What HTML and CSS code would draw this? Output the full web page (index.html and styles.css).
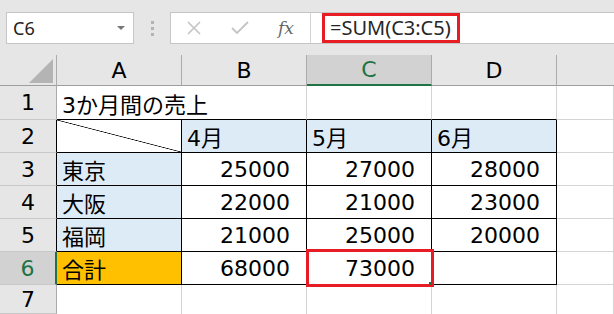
FILE: index.html
```
<!DOCTYPE html>
<html lang="ja">
<head>
    <meta charset="UTF-8">
    <meta name="viewport" content="width=device-width, initial-scale=1.0">
    <title>3か月間の売上</title>
    <link rel="stylesheet" href="styles.css">
</head>
<body>
    <div class="toolbar">
        <div class="namebox">
            <span>C6</span>
            <span class="arrow"></span>
        </div>
        <div class="grip"><i></i><i></i><i></i></div>
        <div class="formula">
            <div class="buttons">
                <svg class="btn" width="16" height="16" viewBox="0 0 16 16">
                    <path d="M2 2 L14 14 M14 2 L2 14" stroke="#c4c4c4" stroke-width="1.6" fill="none"/>
                </svg>
                <svg class="btn" width="18" height="16" viewBox="0 0 18 16">
                    <path d="M1 8 L6 13 L17 2" stroke="#c4c4c4" stroke-width="1.8" fill="none"/>
                </svg>
                <span class="fx">fx</span>
            </div>
            <div class="input">
                <span class="mark">=SUM(C3:C5)</span>
            </div>
        </div>
    </div>

    <div class="sheet">
        <!-- column headers -->
        <div class="corner"><span class="tri"></span></div>
        <div class="colhead">A</div>
        <div class="colhead">B</div>
        <div class="colhead active">C</div>
        <div class="colhead">D</div>
        <div class="colhead last"></div>

        <!-- row 1 -->
        <div class="rowhead">1</div>
        <div class="cell spill top">3か月間の売上</div>
        <div class="cell top"></div>
        <div class="cell top"></div>
        <div class="cell top"></div>
        <div class="cell"></div>

        <!-- row 2 -->
        <div class="rowhead boxed">2</div>
        <div class="cell box diag"></div>
        <div class="cell box blue">4月</div>
        <div class="cell box blue">5月</div>
        <div class="cell box blue">6月</div>
        <div class="cell"></div>

        <!-- row 3 -->
        <div class="rowhead boxed">3</div>
        <div class="cell box blue">東京</div>
        <div class="cell box num">25000</div>
        <div class="cell box num">27000</div>
        <div class="cell box num">28000</div>
        <div class="cell"></div>

        <!-- row 4 -->
        <div class="rowhead boxed">4</div>
        <div class="cell box blue">大阪</div>
        <div class="cell box num">22000</div>
        <div class="cell box num">21000</div>
        <div class="cell box num">23000</div>
        <div class="cell"></div>

        <!-- row 5 -->
        <div class="rowhead boxed">5</div>
        <div class="cell box blue">福岡</div>
        <div class="cell box num">21000</div>
        <div class="cell box num">25000</div>
        <div class="cell box num">20000</div>
        <div class="cell"></div>

        <!-- row 6 -->
        <div class="rowhead active">6</div>
        <div class="cell box orange">合計</div>
        <div class="cell box num">68000</div>
        <div class="cell box num selected">73000<span class="sel"></span><span class="handle"></span></div>
        <div class="cell box"></div>
        <div class="cell"></div>

        <!-- row 7 -->
        <div class="rowhead">7</div>
        <div class="cell open"></div>
        <div class="cell open"></div>
        <div class="cell open"></div>
        <div class="cell open"></div>
        <div class="cell open"></div>
    </div>
</body>
</html>
```

FILE: styles.css
```
body {
    margin: 0;
    width: 614px;
    height: 314px;
    overflow: hidden;
    background: #fff;
    font-family: "DejaVu Sans", "Noto Sans CJK JP", sans-serif;
}

/* name box + formula bar */
.toolbar {
    height: 55px;
    background: #e6e6e6;
    display: flex;
    align-items: flex-start;
    padding-top: 12px;
    box-sizing: border-box;
    overflow: hidden;
}
.toolbar > div {
    flex-shrink: 0;
}
.namebox {
    margin-left: 6px;
    width: 128px;
    height: 32px;
    box-sizing: border-box;
    background: #fff;
    border: 1px solid #c6c6c6;
    display: flex;
    align-items: center;
    justify-content: space-between;
    padding: 0 8px 0 6px;
    font-family: "Noto Sans", sans-serif;
    font-size: 18px;
    color: #222;
}
.arrow {
    width: 0;
    height: 0;
    border-left: 4px solid transparent;
    border-right: 4px solid transparent;
    border-top: 4px solid #777;
}
.grip {
    width: 36px;
    height: 32px;
    display: flex;
    flex-direction: column;
    align-items: center;
    justify-content: center;
    gap: 3px;
}
.grip i {
    width: 3px;
    height: 3px;
    background: #b3b3b3;
}
.formula {
    width: 470px;
    height: 32px;
    box-sizing: border-box;
    background: #fff;
    border: 1px solid #c6c6c6;
    display: flex;
}
.buttons {
    width: 140px;
    border-right: 1px solid #d4d4d4;
    display: flex;
    align-items: center;
    padding-left: 15px;
    gap: 29px;
    box-sizing: border-box;
}
.fx {
    font-family: "DejaVu Serif", serif;
    font-style: italic;
    font-size: 17px;
    color: #666;
}
.input {
    padding-left: 11px;
}
.mark {
    display: inline-block;
    height: 30px;
    box-sizing: border-box;
    border: 3px solid #e81c25;
    padding: 0 0 0 5px;
    width: 138px;
    font-family: "Noto Sans", sans-serif;
    font-size: 20px;
    line-height: 24px;
    color: #262626;
}

/* worksheet grid */
.sheet {
    display: grid;
    grid-template-columns: 57px 125px 125px 125px 125px 1fr;
    grid-template-rows: 31px 34px 33px 33px 33px 33px 33px 1fr;
    height: 259px;
    font-size: 22px;
}
.corner, .colhead, .rowhead, .cell {
    box-sizing: border-box;
    display: flex;
    align-items: center;
    min-width: 0;
}
.corner, .colhead {
    background: #e6e6e6;
    border-right: 1px solid #ababab;
    border-bottom: 1px solid #9e9e9e;
    justify-content: center;
}
.corner {
    position: relative;
}
.tri {
    position: absolute;
    right: 3px;
    bottom: 2px;
    width: 0;
    height: 0;
    border-left: 24px solid transparent;
    border-bottom: 24px solid #b4b4b4;
}
.colhead.last {
    border-right: none;
}
.colhead.active {
    background: #d2d2d2;
    color: #217346;
    border-bottom: 2px solid #217346;
}
.rowhead {
    background: #e6e6e6;
    border-right: 1px solid #ababab;
    border-bottom: 1px solid #c8c8c8;
    justify-content: center;
}
.rowhead.boxed {
    border-right-color: #000;
}
.rowhead.active {
    background: #d2d2d2;
    color: #217346;
    border-right: 2px solid #217346;
}

.cell {
    border-right: 1px solid #d4d4d4;
    border-bottom: 1px solid #d4d4d4;
    padding: 0 5px;
    white-space: nowrap;
    color: #000;
}
.cell.spill {
    border-right: none;
    overflow: visible;
    position: relative;
    z-index: 1;
}
.cell.top {
    border-bottom-color: #000;
}
.cell.spill.top {
    border-bottom: 1px solid #000;
}
.cell.open {
    border-bottom: none;
}
.cell.box {
    border-right-color: #000;
    border-bottom-color: #000;
}
.cell.blue {
    background: #ddebf7;
}
.cell.orange {
    background: #ffc000;
}
.cell.num {
    justify-content: flex-end;
    padding-right: 16px;
}
.cell.diag {
    background: linear-gradient(to top right, transparent calc(50% - 0.7px), #000 50%, transparent calc(50% + 0.7px));
}

/* active cell outline */
.cell.selected {
    position: relative;
}
.sel {
    position: absolute;
    left: -1px;
    top: -3px;
    right: -3px;
    bottom: -3px;
    border: 3px solid #e81c25;
}
.handle {
    position: absolute;
    right: -1px;
    bottom: -1px;
    width: 3px;
    height: 3px;
    background: #217346;
}
```
